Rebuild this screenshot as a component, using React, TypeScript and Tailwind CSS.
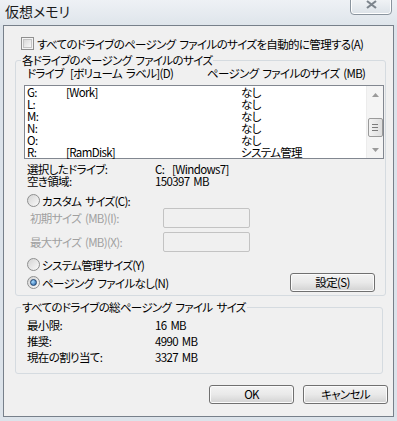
import React from 'react';
import clsx from 'clsx';

const drives = [
  { letter: 'G:', label: '[Work]', size: 'なし' },
  { letter: 'L:', label: '', size: 'なし' },
  { letter: 'M:', label: '', size: 'なし' },
  { letter: 'N:', label: '', size: 'なし' },
  { letter: 'O:', label: '', size: 'なし' },
  { letter: 'R:', label: '[RamDisk]', size: 'システム管理' },
];

const totals = [
  { name: '最小限:', value: '16 MB' },
  { name: '推奨:', value: '4990 MB' },
  { name: '現在の割り当て:', value: '3327 MB' },
];

function CheckBox() {
  return (
    <span className="flex h-[13px] w-[13px] shrink-0 items-center justify-center border border-[#8f8f8f] bg-[#f4f4f4]">
      <span className="h-[9px] w-[9px] border border-[#c4c4c4] bg-gradient-to-br from-[#d9d9d9] to-[#f8f8f8]" />
    </span>
  );
}

function Radio({ checked = false }: { checked?: boolean }) {
  return (
    <span className="flex h-[13px] w-[13px] shrink-0 items-center justify-center rounded-full border border-[#8e8f8f] bg-gradient-to-br from-[#d4d4d4] to-[#fafafa]">
      {checked && (
        <span className="h-[7px] w-[7px] rounded-full border border-[#21456f] bg-[radial-gradient(circle_at_35%_35%,#a8dcff,#1d5ba3)]" />
      )}
    </span>
  );
}

function Button({ children, className }: { children: React.ReactNode; className?: string }) {
  return (
    <div
      className={clsx(
        'flex h-[19px] w-[85px] items-center justify-center rounded-[3px] border border-[#707070] bg-gradient-to-b from-[#f3f3f3] via-[#e9e9e9] to-[#d2d2d2] leading-none shadow-[inset_0_0_0_1px_#fbfbfb]',
        className
      )}
    >
      {children}
    </div>
  );
}

function TextBox() {
  return <div className="h-[20px] w-[87px] rounded-[2px] border border-[#c3c3c3] bg-[#f0f0f0]" />;
}

function ScrollBar() {
  return (
    <div className="flex w-[17px] flex-col items-center border-l border-[#ececec] bg-[#f4f4f4]">
      <div className="flex h-[17px] w-full items-center justify-center">
        <svg width="7" height="4" viewBox="0 0 7 4"><path d="M0 4 L3.5 0 L7 4 Z" fill="#9a9a9a" /></svg>
      </div>
      <div className="mt-[15px] flex h-[19px] w-[15px] flex-col items-center justify-center gap-[2px] rounded-[2px] border border-[#9a9a9a] bg-gradient-to-r from-[#f2f2f2] to-[#dedede]">
        <span className="h-px w-[6px] bg-[#7a7a7a]" />
        <span className="h-px w-[6px] bg-[#7a7a7a]" />
        <span className="h-px w-[6px] bg-[#7a7a7a]" />
      </div>
      <div className="flex-1" />
      <div className="flex h-[17px] w-full items-center justify-center">
        <svg width="7" height="4" viewBox="0 0 7 4"><path d="M0 0 L3.5 4 L7 0 Z" fill="#9a9a9a" /></svg>
      </div>
    </div>
  );
}

export default function App() {
  return (
    <div className="flex h-[421px] w-[397px] flex-col overflow-hidden whitespace-nowrap bg-[#dce3ea] font-['Noto_Sans_CJK_JP','Noto_Sans',sans-serif] text-[11.5px] leading-[12px] tracking-[-0.65px] text-black [font-feature-settings:'palt'] [word-spacing:2px]">
      {/* title bar */}
      <div className="relative h-[25px] shrink-0 bg-gradient-to-b from-[#eef1f5] to-[#dfe5eb]">
        <span className="absolute left-[5px] top-[4px] text-[14px] leading-[14px] tracking-normal text-[#1a1a1a]">仮想メモリ</span>
        <div className="absolute right-[5px] top-[-4px] flex h-[19px] w-[42px] items-start justify-center rounded-b-[4px] border border-[#8a949e] bg-gradient-to-b from-[#f4f6f8] to-[#dce2e8] pt-[3px] shadow-[inset_0_0_0_1px_#ffffff]">
          <svg width="11" height="9" viewBox="0 0 11 9">
            <path d="M1 1 L10 8 M10 1 L1 8" stroke="#7d858d" strokeWidth="2.2" />
          </svg>
        </div>
      </div>

      {/* client */}
      <div className="mx-[3px] mb-[4px] flex flex-1 flex-col border border-[#77808a] bg-[#f0f0f0]">
        <div className="ml-[17px] mt-[11px] flex h-[13px] items-center gap-[3px]">
          <CheckBox />
          <span>すべてのドライブのページング ファイルのサイズを自動的に管理する(A)</span>
        </div>

        <fieldset className="ml-[11px] mt-[4px] w-[371px] rounded-[3px] border border-[#d5dbe0] pb-[3px]">
          <legend className="ml-[5px] px-[1px] leading-[13px]">各ドライブのページング ファイルのサイズ</legend>
          <div className="pl-[8px] pr-[1px]">
            <div className="grid h-[12px] grid-cols-[43px_137px_1fr] pl-[3px]">
              <span>ドライブ</span>
              <span>[ボリューム ラベル](D)</span>
              <span>ページング ファイルのサイズ (MB)</span>
            </div>
            <div className="mt-[6px] flex h-[74px] border border-[#828790] bg-white">
              <div className="flex-1">
                {drives.map((d) => (
                  <div key={d.letter} className="grid h-[12px] grid-cols-[39px_175px_1fr] pl-[2px]">
                    <span>{d.letter}</span>
                    <span>{d.label}</span>
                    <span>{d.size}</span>
                  </div>
                ))}
              </div>
              <ScrollBar />
            </div>

            <div className="mt-[4px] grid grid-cols-[128px_1fr] pl-[3px]">
              <span className="h-[12px]">選択したドライブ:</span>
              <span className="h-[12px]">C:&nbsp;&nbsp;[Windows7]</span>
              <span className="h-[12px]">空き領域:</span>
              <span className="h-[12px]">150397 MB</span>
            </div>

            <div className="mt-[7px] flex h-[13px] items-center gap-[2px] pl-[3px]">
              <Radio />
              <span>カスタム サイズ(C):</span>
            </div>
            <div className="mt-[1px] flex items-center pl-[6px]">
              <span className="w-[133px] text-[#a0a0a0]">初期サイズ (MB)(I):</span>
              <TextBox />
            </div>
            <div className="mt-[4px] flex items-center pl-[6px]">
              <span className="w-[133px] text-[#a0a0a0]">最大サイズ (MB)(X):</span>
              <TextBox />
            </div>

            <div className="mt-[6px] flex h-[13px] items-center gap-[2px] pl-[3px]">
              <Radio />
              <span>システム管理サイズ(Y)</span>
            </div>
            <div className="mt-[2px] flex items-center justify-between pl-[3px] pr-[9px]">
              <div className="flex items-center gap-[2px]">
                <Radio checked />
                <span>ページング ファイルなし(N)</span>
              </div>
              <Button>設定(S)</Button>
            </div>
          </div>
        </fieldset>

        <fieldset className="ml-[11px] mt-[5px] w-[368px] rounded-[3px] border border-[#d5dbe0] pb-[8px]">
          <legend className="ml-[5px] px-[1px] leading-[13px]">すべてのドライブの総ページング ファイル サイズ</legend>
          <div className="mt-[3px] grid grid-cols-[128px_1fr] pl-[11px]">
            {totals.map((t) => (
              <React.Fragment key={t.name}>
                <span className="flex h-[16px] items-center">{t.name}</span>
                <span className="flex h-[16px] items-center">{t.value}</span>
              </React.Fragment>
            ))}
          </div>
        </fieldset>

        <div className="mt-[11px] flex justify-end gap-[9px] pr-[5px]">
          <Button>OK</Button>
          <Button>キャンセル</Button>
        </div>
      </div>
    </div>
  );
}
